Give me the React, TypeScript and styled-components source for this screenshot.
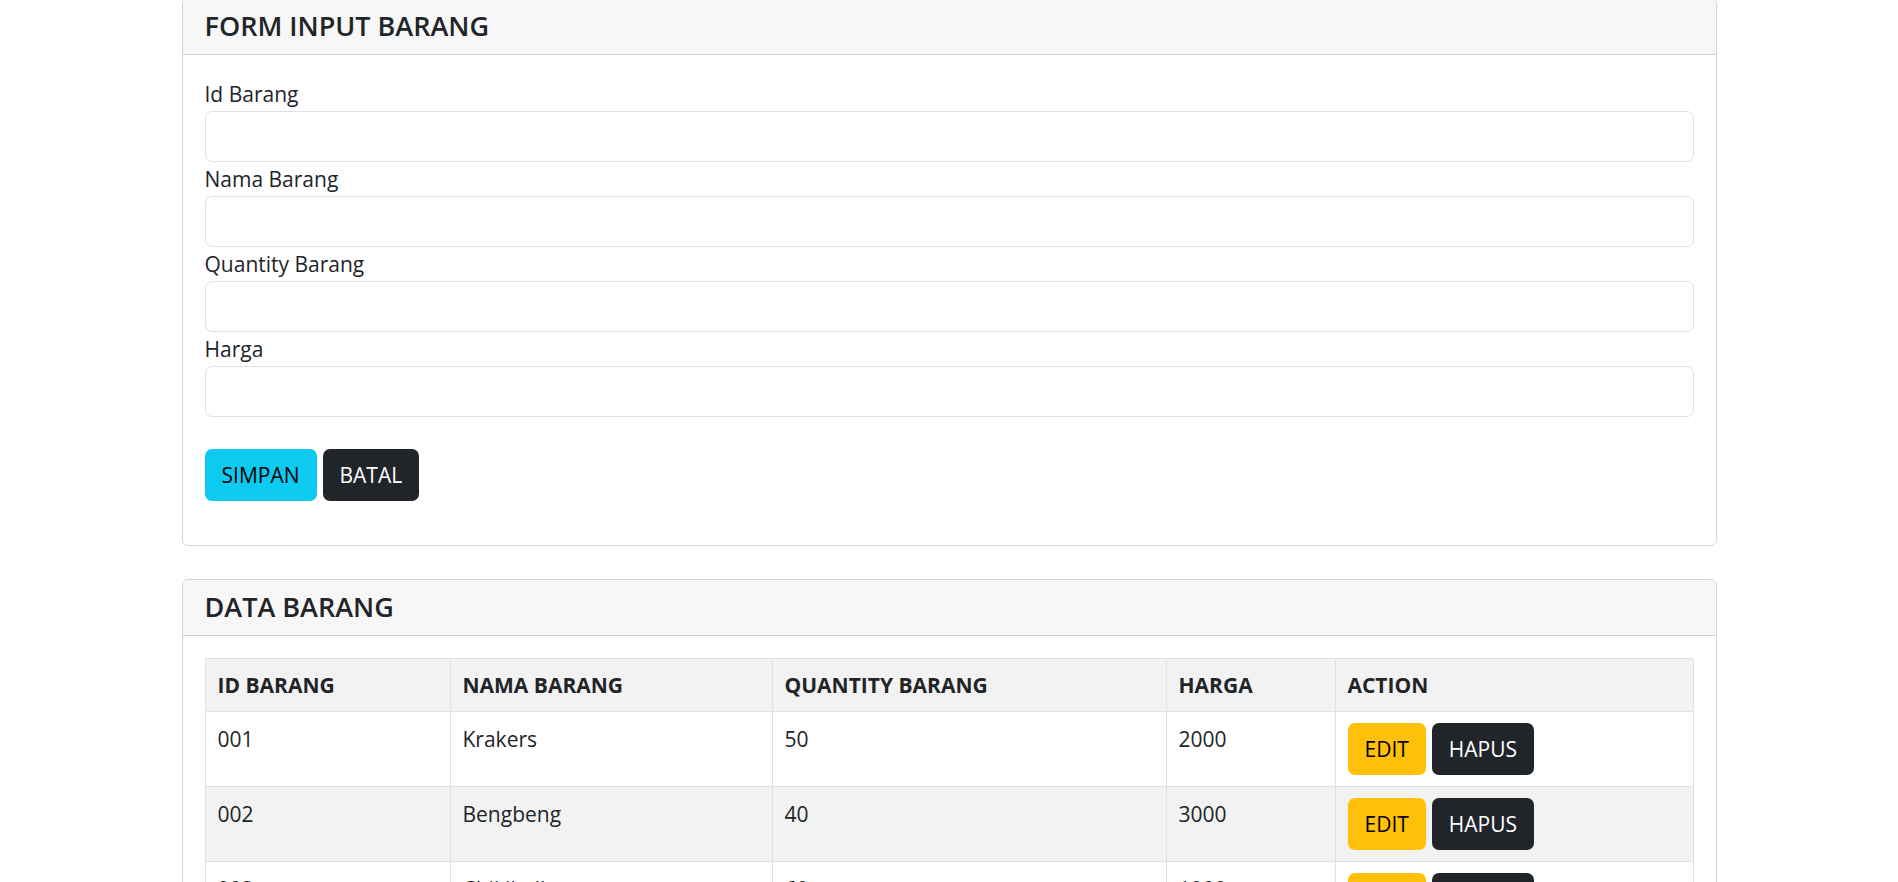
import React from "react";
import styled, { createGlobalStyle } from "styled-components";

const GlobalStyle = createGlobalStyle`
  html, body { margin: 0; padding: 0; background: #ffffff; }
  body {
    font-family: "Open Sans", "Noto Sans", "Liberation Sans", sans-serif;
    color: #212529;
    font-size: 21px;
    line-height: 1.5;
  }
  * { box-sizing: border-box; }
`;

const Page = styled.div`
  width: 1535px;
  margin: -2px auto 0;
  display: flex;
  flex-direction: column;
  gap: 33px;
`;

const Card = styled.section`
  border: 1px solid #d3d3d3;
  border-radius: 6px;
  background: #ffffff;
  overflow: hidden;
`;

const CardHeader = styled.div`
  height: 56px;
  padding: 0 22px;
  display: flex;
  align-items: center;
  background: #f7f7f7;
  border-bottom: 1px solid #d3d3d3;
`;

const Title = styled.h4`
  margin: 0;
  font-size: 27px;
  font-weight: 600;
  line-height: 1.2;
  color: #212529;
`;

const CardBody = styled.div`
  padding: 22px;
`;

const Label = styled.label`
  display: block;
  font-size: 21px;
  line-height: 34px;
`;

const Input = styled.input`
  display: block;
  width: 100%;
  height: 51px;
  border: 1px solid #dee2e6;
  border-radius: 7px;
  padding: 0 16px;
  font: inherit;
  background: #fff;
  outline: none;
`;

const Actions = styled.div`
  display: flex;
  gap: 6px;
  margin-top: 32px;
  margin-bottom: 22px;
`;

const Button = styled.button<{ $variant: "info" | "dark" | "warning" }>`
  height: 52px;
  padding: 0 17px;
  border: none;
  border-radius: 7px;
  font-family: inherit;
  font-size: 21px;
  line-height: 1;
  cursor: pointer;
  background: ${(p) =>
    p.$variant === "info" ? "#0dcaf0" : p.$variant === "warning" ? "#ffc107" : "#212529"};
  color: ${(p) => (p.$variant === "dark" ? "#ffffff" : "#000000")};
`;

const Table = styled.table`
  width: 100%;
  border-collapse: collapse;
  table-layout: fixed;
  font-size: 21px;
`;

const Row = styled.tr<{ $striped?: boolean }>`
  background: ${(p) => (p.$striped ? "#f2f2f2" : "#ffffff")};
`;

const Th = styled.th`
  border: 1px solid #dee2e6;
  padding: 11px 12px 10px;
  text-align: left;
  vertical-align: top;
  font-weight: 700;
  line-height: 31px;
`;

const Td = styled.td`
  border: 1px solid #dee2e6;
  padding: 11px 12px;
  vertical-align: top;
  line-height: 32px;
`;

const CellActions = styled.div`
  display: flex;
  gap: 6px;
`;

const fields = ["Id Barang", "Nama Barang", "Quantity Barang", "Harga"];

const rows = [
  { id: "001", nama: "Krakers", qty: "50", harga: "2000" },
  { id: "002", nama: "Bengbeng", qty: "40", harga: "3000" },
  { id: "003", nama: "Chikiball", qty: "60", harga: "1000" },
];

export default function App() {
  return (
    <>
      <GlobalStyle />
      <Page>
        <Card>
          <CardHeader>
            <Title>FORM INPUT BARANG</Title>
          </CardHeader>
          <CardBody>
            {fields.map((f) => (
              <div key={f}>
                <Label>{f}</Label>
                <Input type="text" />
              </div>
            ))}
            <Actions>
              <Button $variant="info">SIMPAN</Button>
              <Button $variant="dark">BATAL</Button>
            </Actions>
          </CardBody>
        </Card>
        <Card>
          <CardHeader>
            <Title>DATA BARANG</Title>
          </CardHeader>
          <CardBody>
            <Table>
              <colgroup>
                <col style={{ width: 245 }} />
                <col style={{ width: 322 }} />
                <col style={{ width: 394 }} />
                <col style={{ width: 169 }} />
                <col />
              </colgroup>
              <tbody>
                <Row $striped>
                  <Th>ID BARANG</Th>
                  <Th>NAMA BARANG</Th>
                  <Th>QUANTITY BARANG</Th>
                  <Th>HARGA</Th>
                  <Th>ACTION</Th>
                </Row>
                {rows.map((r, i) => (
                  <Row key={r.id} $striped={i % 2 === 1}>
                    <Td>{r.id}</Td>
                    <Td>{r.nama}</Td>
                    <Td>{r.qty}</Td>
                    <Td>{r.harga}</Td>
                    <Td>
                      <CellActions>
                        <Button $variant="warning">EDIT</Button>
                        <Button $variant="dark">HAPUS</Button>
                      </CellActions>
                    </Td>
                  </Row>
                ))}
              </tbody>
            </Table>
          </CardBody>
        </Card>
      </Page>
    </>
  );
}
